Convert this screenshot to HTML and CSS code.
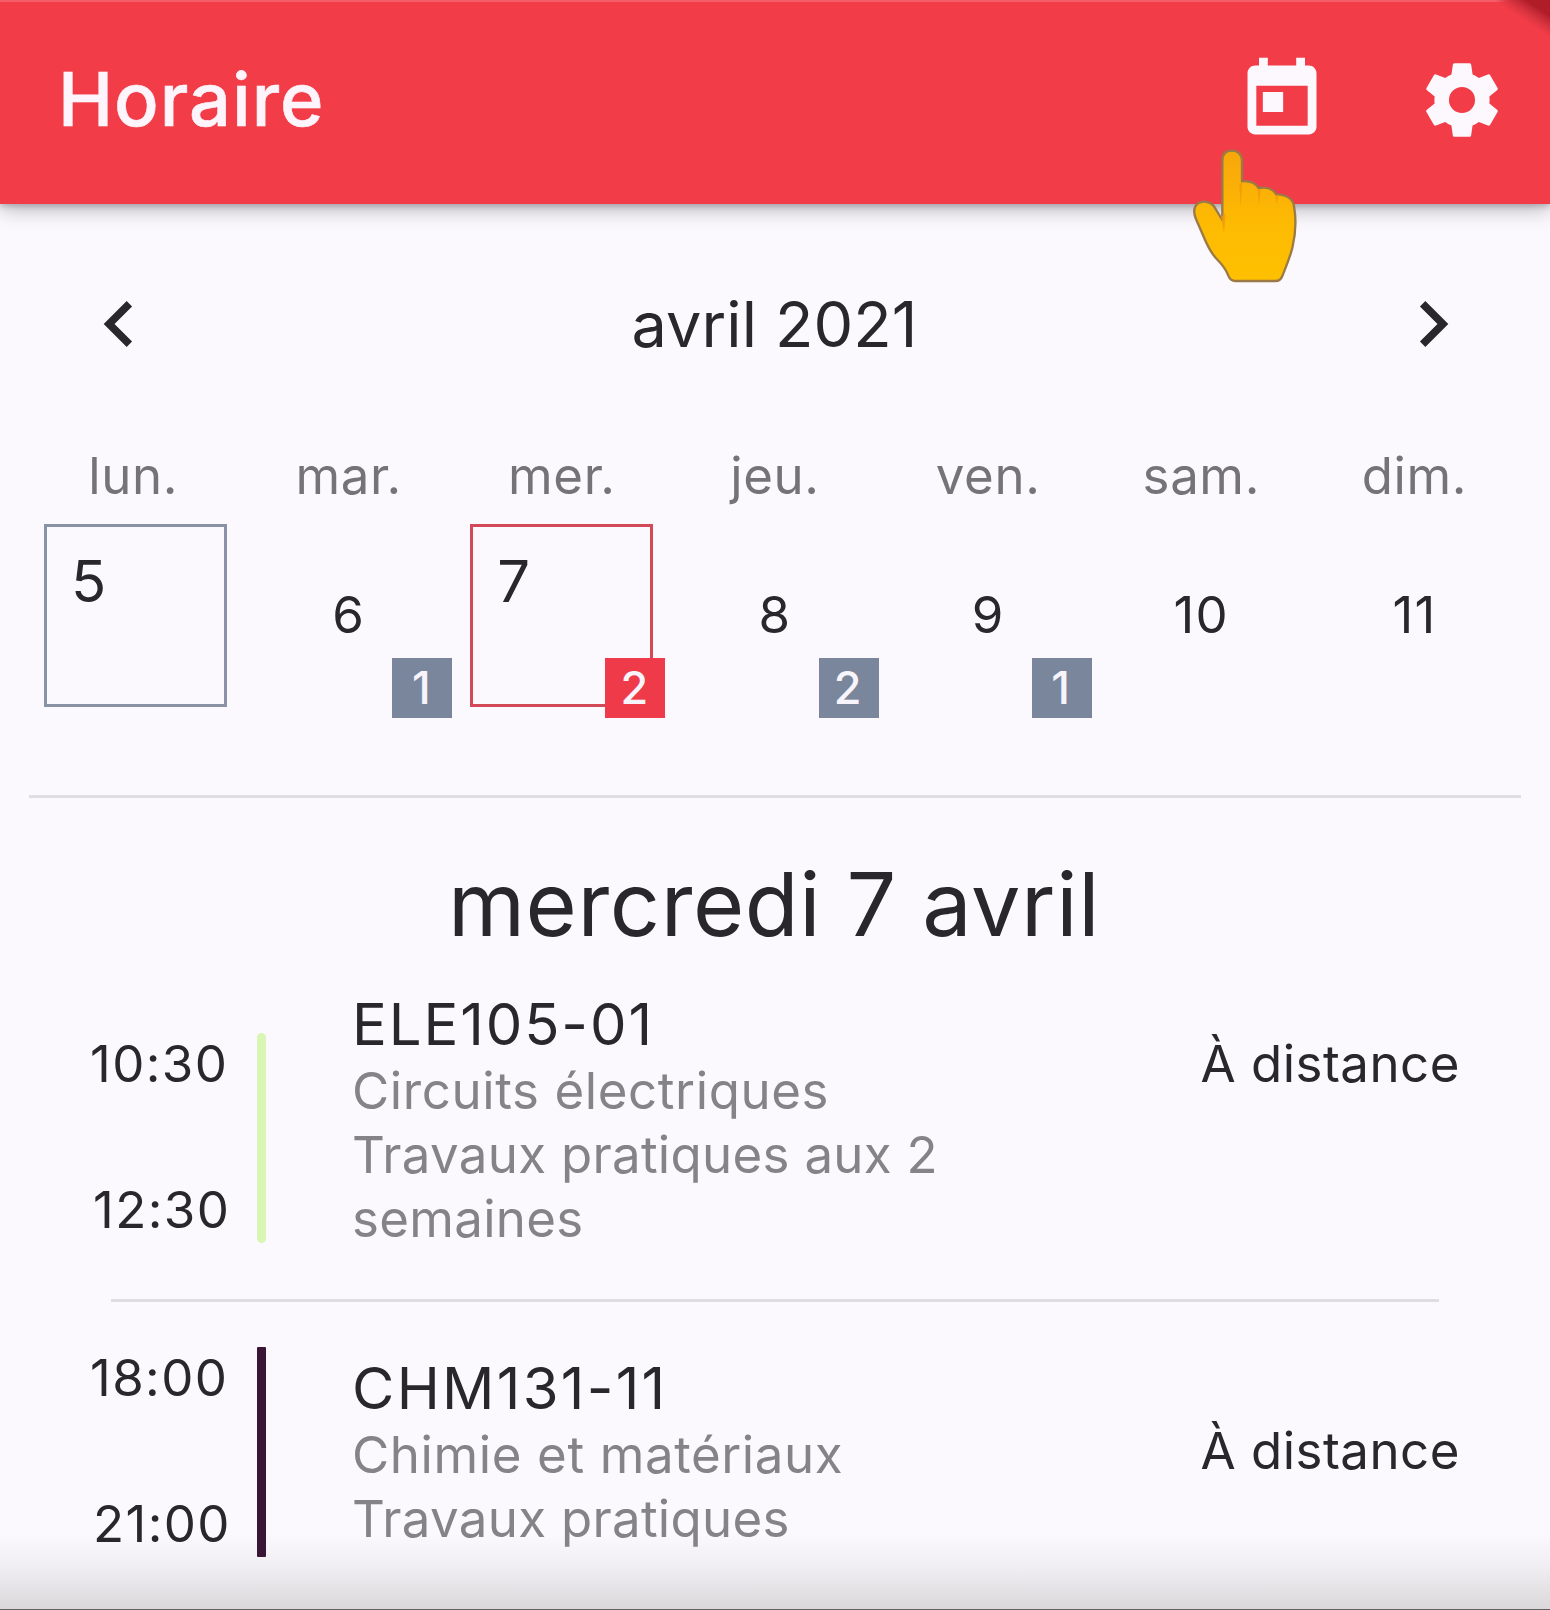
FILE: index.html
```html
<!DOCTYPE html>
<html lang="fr">
<head>
<meta charset="utf-8">
<title>Horaire</title>
<link rel="stylesheet" href="styles.css">
</head>
<body>
<div class="screen">
  <header class="app-bar">
    <h1 class="app-title">Horaire</h1>
    <div class="actions">
      <svg class="icon" viewBox="0 0 24 24"><path d="M19 3h-1V1h-2.300v2H8.300V1H6v2H5c-1.110 0-1.990.9-1.990 2L3 19c0 1.100.890 2 2 2h14c1.100 0 2-.9 2-2V5c0-1.100-.9-2-2-2zm-.3 15.700H5.300V8.300h13.400v10.400zM7 9.900h5.300v5.200H7z"/></svg>
      <svg class="icon" viewBox="0 0 24 24"><path d="M19.140 12.940c.04-.3.06-.61.06-.94 0-.32-.02-.64-.07-.94l2.030-1.580c.18-.14.23-.41.12-.61l-1.920-3.320c-.12-.22-.37-.29-.59-.22l-2.390.96c-.5-.38-1.030-.7-1.620-.94l-.36-2.540c-.04-.24-.24-.41-.48-.41h-3.840c-.24 0-.43.17-.47.41l-.36 2.540c-.59.24-1.130.57-1.620.94l-2.390-.96c-.22-.08-.47 0-.59.22L2.740 8.870c-.12.21-.08.47.12.61l2.030 1.580c-.05.3-.09.63-.09.94s.02.64.07.94l-2.030 1.580c-.18.14-.23.41-.12.61l1.920 3.320c.12.22.37.29.59.22l2.390-.96c.5.38 1.030.7 1.620.94l.36 2.540c.05.24.24.41.48.41h3.840c.24 0 .44-.17.47-.41l.36-2.540c.59-.24 1.130-.56 1.620-.94l2.390.96c.22.08.47 0 .59-.22l1.920-3.320c.12-.22.07-.47-.12-.61l-2.010-1.580zM12 15.400a3.400 3.400 0 1 1 0-6.800 3.400 3.400 0 0 1 0 6.800z"/></svg>
    </div>
    <div class="corner"></div>
  </header>

  <div class="bottom-fade"></div>

  <main>
    <section class="calendar">
      <div class="month-nav">
        <svg class="chevron" viewBox="0 0 24 24"><path d="M15.410 7.410L14 6l-6 6 6 6 1.410-1.410L10.830 12z"/></svg>
        <h2 class="month">avril 2021</h2>
        <svg class="chevron" viewBox="0 0 24 24"><path d="M10 6L8.590 7.410 13.170 12l-4.580 4.590L10 18l6-6z"/></svg>
      </div>
      <div class="week weekdays">
        <span>lun.</span><span>mar.</span><span>mer.</span><span>jeu.</span><span>ven.</span><span>sam.</span><span>dim.</span>
      </div>
      <div class="week days">
        <div class="day boxed today">5</div>
        <div class="day">6<span class="badge">1</span></div>
        <div class="day boxed selected">7<span class="badge">2</span></div>
        <div class="day">8<span class="badge">2</span></div>
        <div class="day">9<span class="badge">1</span></div>
        <div class="day">10</div>
        <div class="day">11</div>
      </div>
    </section>

    <section class="agenda">
      <h2 class="date">mercredi 7 avril</h2>
      <article class="event long">
        <div class="times"><span>10:30</span><span>12:30</span></div>
        <div class="rail lime"></div>
        <div class="info">
          <h3 class="code">ELE105-01</h3>
          <p class="detail course">Circuits électriques</p>
          <p class="detail">Travaux pratiques aux 2 semaines</p>
        </div>
        <div class="place">À distance</div>
      </article>
      <article class="event">
        <div class="times"><span>18:00</span><span>21:00</span></div>
        <div class="rail plum"></div>
        <div class="info">
          <h3 class="code">CHM131-11</h3>
          <p class="detail course">Chimie et matériaux</p>
          <p class="detail">Travaux pratiques</p>
        </div>
        <div class="place">À distance</div>
      </article>
    </section>
  </main>

  <svg class="pointer" viewBox="120 435 330 420">
    <defs><linearGradient id="skin" x1="0" y1="0" x2="0" y2="1"><stop offset="0" stop-color="#f8a60a"/><stop offset=".55" stop-color="#fdba02"/><stop offset="1" stop-color="#ffc000"/></linearGradient></defs>
    <path fill="url(#skin)" stroke="#9b7a45" stroke-width="7" stroke-linejoin="round" d="M217 640V482C217 462 228 452 246 452S276 464 276 482V544C297 542 316 550 326 564C350 560 370 568 379 583C411 584 432 598 433 625C440 668 436 706 427 744C418 778 407 802 397 828C393 839 387 843 377 843H256C245 843 239 838 235 827C228 809 217 794 203 780C184 762 172 737 160 708L137 655C130 636 132 620 143 611C157 601 180 604 192 619L217 660Z"/>
    <path class="crease" d="M213 650L222 699L227 640ZM268 550L272 618L277 550ZM323 568L327 615L332 568ZM376 586L379 613L386 586Z"/>
  </svg>
</div>
</body>
</html>
```
FILE: styles.css
```css
* { box-sizing: border-box; }

body {
  margin: 0;
  background: #fbf9fe;
  color: #29272b;
  font-family: Inter, "Liberation Sans", sans-serif;
  font-size: 51px;
  font-weight: 400;
}

h1, h2, h3, p { margin: 0; font-weight: 400; }

.screen {
  position: relative;
  width: 1550px;
  height: 1610px;
  overflow: hidden;
  background: #fbf9fe;
}

.app-bar {
  position: relative;
  display: flex;
  align-items: center;
  justify-content: space-between;
  height: 204px;
  padding: 0 42px 6px 58px;
  background: #f23c48;
  border-top: 2px solid #f45d67;
  color: #fdf5fb;
  box-shadow: 0 5px 20px rgba(0, 0, 0, .28), 0 2px 6px rgba(0, 0, 0, .2);
}

.app-title {
  padding-bottom: 2px;
  font-size: 74px;
  font-weight: 500;
  line-height: 90px;
  letter-spacing: 1px;
  -webkit-text-stroke: .6px #fdf5fb;
}

.actions { display: flex; gap: 88px; }
.icon { width: 92px; height: 92px; fill: #fdf8fd; }

.corner {
  position: absolute;
  top: -2px;
  right: 0;
  width: 54px;
  height: 36px;
  background: linear-gradient(to bottom left, #b01d27 0 22%, #c42a35 30%, #da3540 40%, rgba(242, 60, 72, 0) 52%);
}

main { position: relative; }

.calendar {
  position: relative;
  padding: 60px 29px 88px;
}

.calendar::after {
  content: "";
  position: absolute;
  left: 29px;
  right: 29px;
  bottom: -3px;
  height: 3px;
  background: #e0dee2;
}

.month-nav {
  display: flex;
  align-items: center;
  justify-content: space-between;
  height: 120px;
  padding: 0 42px 0 44px;
}

.month { font-size: 63px; line-height: 80px; letter-spacing: .1px; padding-right: 3px; }
.chevron { width: 92px; height: 92px; fill: #29272b; }

.week { display: grid; grid-template-columns: repeat(7, 1fr); }

.weekdays {
  margin-top: 62px;
  line-height: 60px;
  text-align: center;
  color: #757378;
  letter-spacing: .6px;
}

.weekdays span:first-child { padding-right: 5px; }

.days { padding-top: 18px; }

.day {
  position: relative;
  display: flex;
  align-items: center;
  justify-content: center;
  height: 183px;
  margin: 0 15px;
  padding-bottom: 2px;
  line-height: 60px;
  letter-spacing: 1.2px;
}

.boxed {
  align-items: flex-start;
  justify-content: flex-start;
  padding: 24px 0 0 24px;
  border: 3px solid #8a92a5;
  font-size: 58px;
}

.selected { border-color: #d24a58; }

.badge {
  position: absolute;
  right: -12px;
  bottom: -11px;
  width: 60px;
  height: 60px;
  padding-right: 2px;
  background: #7a869c;
  color: #f7f4fb;
  font-size: 45px;
  font-weight: 500;
  letter-spacing: 0;
  text-align: center;
}

.selected .badge { right: -15px; bottom: -14px; background: #ef3b49; }

.agenda { padding-top: 59px; }

.date {
  padding-right: 2px;
  font-size: 88px;
  line-height: 100px;
  letter-spacing: .6px;
  text-align: center;
}

.event {
  display: grid;
  grid-template-columns: 117px 8px 730px 1fr;
  align-items: start;
  margin: 0 90px;
  padding-top: 46px;
}

.event.long { padding: 36px 0 48px; }

.event.long::after {
  content: "";
  grid-column: 1 / -1;
  height: 3px;
  margin: 49px 21px -49px;
  background: #dfdde1;
}

.times {
  display: flex;
  flex-direction: column;
  justify-content: space-between;
  height: 210px;
  padding: 1px 0 3px;
  line-height: 60px;
  letter-spacing: 1.4px;
  white-space: nowrap;
}

.times span:last-child { padding-left: 3px; }

.rail { width: 9px; height: 210px; margin-left: 50px; }
.lime { background: #d9f6b5; border-radius: 5px; }
.plum { background: #3a1636; border-radius: 1px; }

.long .times, .long .rail { margin-top: 43px; }

.info { padding: 7px 0 0 137px; }
.long .info { padding-top: 0; }

.code { font-size: 58px; line-height: 69px; letter-spacing: 1.9px; }
.event:last-child .code { letter-spacing: 2.3px; }
.detail { line-height: 64px; color: #858388; letter-spacing: .3px; }
.course { letter-spacing: .6px; }
.detail:last-child { margin-bottom: -1px; }

.place {
  align-self: center;
  line-height: 60px;
  text-align: right;
  letter-spacing: .5px;
  white-space: nowrap;
}

.event:last-child .place { margin-top: -2px; }
.long .place { align-self: start; margin-top: 44px; }

.bottom-fade {
  position: absolute;
  left: 0;
  right: 0;
  bottom: 0;
  height: 76px;
  background: linear-gradient(to bottom, rgba(218, 216, 218, 0), rgba(218, 216, 218, .35) 45%, #dad8da);
  border-bottom: 1px solid #626164;
}

.pointer {
  position: absolute;
  left: 1190px;
  top: 145px;
  width: 110px;
  height: 140px;
}

.crease { fill: #f39a08; opacity: .8; }
```
